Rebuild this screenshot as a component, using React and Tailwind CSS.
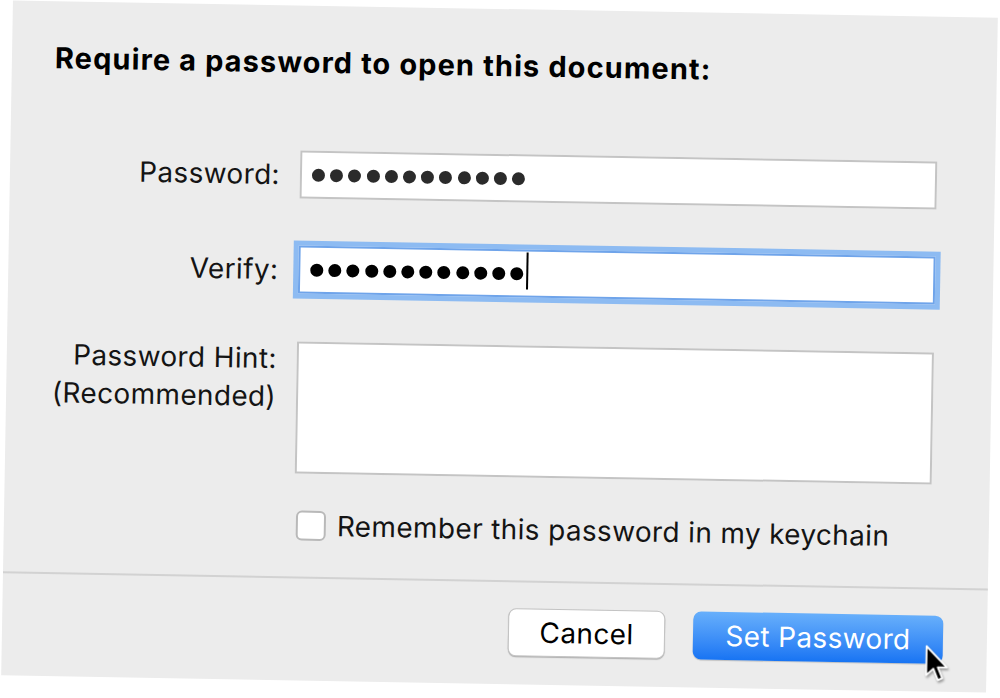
import React from 'react';

const Dots = ({ tone }) => (
    <div className="flex items-center gap-[5.2px]">
        {Array.from({ length: 12 }).map((_, i) => (
            <span key={i} className={`block h-[13px] w-[13px] rounded-full ${tone}`} />
        ))}
    </div>
);

const Pointer = () => (
    <svg
        className="absolute left-[232px] top-[29px] drop-shadow-[1px_2px_1px_rgba(0,0,0,0.35)]"
        width="26"
        height="40"
        viewBox="0 0 22 34"
    >
        <path
            d="M1.5 1.5 L1.5 26 L7.5 20.5 L11.5 30 L15.2 28.4 L11.3 19.2 L19 19.2 Z"
            fill="#000"
            stroke="#fff"
            strokeWidth="1.6"
            strokeLinejoin="round"
        />
    </svg>
);

export default function App() {
    return (
        <div className="w-[1000px] h-[698px] overflow-hidden bg-white pt-[9px] pl-[7px] font-['Inter','Liberation_Sans',sans-serif] text-[#141414] tracking-[0.35px]">
            <div className="flex h-[675px] w-[985px] rotate-[1deg] flex-col bg-[#ececec]">
                <h1 className="pl-[43px] pt-[40px] text-[29px] font-bold leading-[34px] tracking-[1.1px] text-black">
                    Require a password to open this document:
                </h1>

                {/* password */}
                <div className="mt-[71px] flex h-[48px] items-center">
                    <label className="w-[270px] text-right text-[28px] leading-[34px]">Password:</label>
                    <div className="ml-[20px] flex h-[48px] w-[637px] items-center border-2 border-[#c4c4c4] bg-white pl-[10px]">
                        <Dots tone="bg-[#2b2b2b]" />
                    </div>
                </div>

                {/* verify */}
                <div className="mt-[47px] flex h-[48px] items-center">
                    <label className="w-[270px] text-right text-[28px] leading-[34px]">Verify:</label>
                    <div className="ml-[20px] flex h-[48px] w-[637px] items-center border-2 border-[#6fa4ea] bg-white pl-[10px] shadow-[0_0_0_5px_#8dbbf2]">
                        <Dots tone="bg-black" />
                        <span className="ml-[3px] -mt-[6px] block h-[37px] w-[2px] bg-black" />
                    </div>
                </div>

                {/* hint */}
                <div className="mt-[48px] flex items-start">
                    <label className="-mt-[2px] w-[270px] text-right text-[28px] leading-[38px]">
                        Password Hint:
                        <br />
                        (Recommended)
                    </label>
                    <div className="ml-[20px] h-[132px] w-[637px] border-2 border-[#c4c4c4] bg-white" />
                </div>

                {/* keychain */}
                <div className="mt-[35px] flex items-center pl-[292px]">
                    <span className="block h-[30px] w-[30px] rounded-[6px] border-2 border-[#b9b9b9] bg-white" />
                    <span className="ml-[11px] text-[28px] leading-[34px]">Remember this password in my keychain</span>
                </div>

                <div className="mt-[34px] h-[2px] w-full bg-[#d2d2d2]" />

                {/* buttons */}
                <div className="mt-[26px] flex gap-[28px] pl-[506px]">
                    <button className="flex h-[48px] w-[157px] items-center justify-center rounded-[8px] border border-[#c3c3c3] bg-white text-[28px] leading-[34px] text-black shadow-[0_1px_1px_rgba(0,0,0,0.25)]">
                        Cancel
                    </button>
                    <button className="relative flex h-[48px] w-[250px] items-center justify-center rounded-[8px] bg-gradient-to-b from-[#67affb] to-[#1774f3] text-[28px] leading-[34px] text-white shadow-[0_1px_1px_rgba(0,0,0,0.2)]">
                        Set Password
                        <Pointer />
                    </button>
                </div>
            </div>
        </div>
    );
}
